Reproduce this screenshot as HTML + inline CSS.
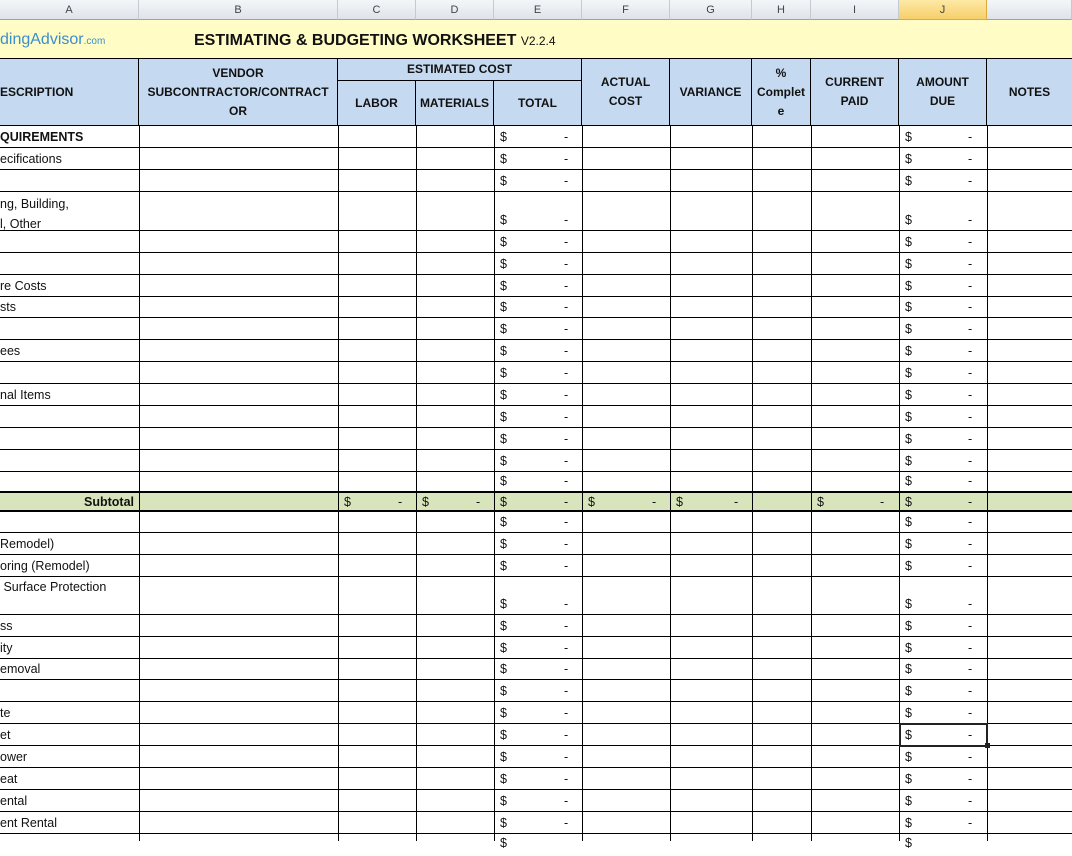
<!DOCTYPE html>
<html><head><meta charset="utf-8">
<style>
*{margin:0;padding:0;box-sizing:border-box}
body{width:1072px;height:841px;overflow:hidden;background:#fff;position:relative;font-family:"Liberation Sans",sans-serif;font-size:12.5px;color:#111}
.ab{position:absolute}
.ch{position:absolute;top:0;height:20px;background:linear-gradient(#f4f6f9,#dfe4ea);border-right:1px solid #c4cad3;border-bottom:1px solid #9aa3ad;text-align:center;font-size:11px;line-height:20px;color:#444}
.vl{position:absolute;width:1px;background:#000;top:126px;bottom:0}
.r{position:absolute;left:0;width:1072px;border-bottom:1px solid #000}
.r span{position:absolute;bottom:2px;white-space:nowrap;line-height:15px}
.h{position:absolute;background:#c5d9f1;border-right:1px solid #000;font-weight:bold;font-size:12px;text-align:center;display:flex;align-items:center;justify-content:center;line-height:19px}
</style></head><body>
<div class="ch" style="left:0;width:139px">A</div>
<div class="ch" style="left:139px;width:199px">B</div>
<div class="ch" style="left:338px;width:78px">C</div>
<div class="ch" style="left:416px;width:78px">D</div>
<div class="ch" style="left:494px;width:88px">E</div>
<div class="ch" style="left:582px;width:88px">F</div>
<div class="ch" style="left:670px;width:82px">G</div>
<div class="ch" style="left:752px;width:59px">H</div>
<div class="ch" style="left:811px;width:88px">I</div>
<div class="ch" style="left:899px;width:88px;background:linear-gradient(#fde9a6,#f7cf6a);border-color:#e0a93c">J</div>
<div class="ch" style="left:987px;width:85px"></div>

<div class="ab" style="left:0;top:20px;width:1072px;height:39px;background:#fffcc6;border-bottom:1px solid #000"></div>
<div class="ab" style="left:0;top:31px;font-size:16px;color:#3a8fd0;font-family:'Liberation Sans',sans-serif">dingAdvisor<span style="font-size:10px">.com</span></div>
<div class="ab" style="left:194px;top:32px;font-size:16px;font-weight:bold;color:#111">ESTIMATING &amp; BUDGETING WORKSHEET <span style="font-weight:normal;font-size:12px">V2.2.4</span></div>

<div class="ab" style="left:0;top:59px;width:1072px;height:67px;background:#c5d9f1;border-bottom:2px solid #000"></div>
<div class="h" style="left:0;top:59px;width:139px;height:66px;justify-content:flex-start">ESCRIPTION</div>
<div class="h" style="left:139px;top:59px;width:199px;height:66px">VENDOR<br>SUBCONTRACTOR/CONTRACT<br>OR</div>
<div class="h" style="left:338px;top:59px;width:244px;height:22px;border-bottom:1px solid #000">ESTIMATED COST</div>
<div class="h" style="left:338px;top:81px;width:78px;height:44px">LABOR</div>
<div class="h" style="left:416px;top:81px;width:78px;height:44px">MATERIALS</div>
<div class="h" style="left:494px;top:81px;width:88px;height:44px">TOTAL</div>
<div class="h" style="left:582px;top:59px;width:88px;height:66px">ACTUAL<br>COST</div>
<div class="h" style="left:670px;top:59px;width:82px;height:66px">VARIANCE</div>
<div class="h" style="left:752px;top:59px;width:59px;height:66px">%<br>Complet<br>e</div>
<div class="h" style="left:811px;top:59px;width:88px;height:66px">CURRENT<br>PAID</div>
<div class="h" style="left:899px;top:59px;width:88px;height:66px">AMOUNT<br>DUE</div>
<div class="h" style="left:987px;top:59px;width:85px;height:66px;border-right:0">NOTES</div>

<div class="r" style="top:126px;height:22px"><span style="left:0;font-weight:bold">QUIREMENTS</span><span style="left:500px">$</span><span style="left:564px">-</span><span style="left:905px">$</span><span style="left:968px">-</span></div>
<div class="r" style="top:148px;height:22px"><span style="left:0">ecifications</span><span style="left:500px">$</span><span style="left:564px">-</span><span style="left:905px">$</span><span style="left:968px">-</span></div>
<div class="r" style="top:170px;height:22px"><span style="left:500px">$</span><span style="left:564px">-</span><span style="left:905px">$</span><span style="left:968px">-</span></div>
<div class="r" style="top:192px;height:39px"><span style="left:0;top:2px;bottom:auto;line-height:20px">ng, Building,<br>l, Other</span><span style="left:500px">$</span><span style="left:564px">-</span><span style="left:905px">$</span><span style="left:968px">-</span></div>
<div class="r" style="top:231px;height:22px"><span style="left:500px">$</span><span style="left:564px">-</span><span style="left:905px">$</span><span style="left:968px">-</span></div>
<div class="r" style="top:253px;height:22px"><span style="left:500px">$</span><span style="left:564px">-</span><span style="left:905px">$</span><span style="left:968px">-</span></div>
<div class="r" style="top:275px;height:22px"><span style="left:0">re Costs</span><span style="left:500px">$</span><span style="left:564px">-</span><span style="left:905px">$</span><span style="left:968px">-</span></div>
<div class="r" style="top:297px;height:21px"><span style="left:0">sts</span><span style="left:500px">$</span><span style="left:564px">-</span><span style="left:905px">$</span><span style="left:968px">-</span></div>
<div class="r" style="top:318px;height:22px"><span style="left:500px">$</span><span style="left:564px">-</span><span style="left:905px">$</span><span style="left:968px">-</span></div>
<div class="r" style="top:340px;height:22px"><span style="left:0">ees</span><span style="left:500px">$</span><span style="left:564px">-</span><span style="left:905px">$</span><span style="left:968px">-</span></div>
<div class="r" style="top:362px;height:22px"><span style="left:500px">$</span><span style="left:564px">-</span><span style="left:905px">$</span><span style="left:968px">-</span></div>
<div class="r" style="top:384px;height:22px"><span style="left:0">nal Items</span><span style="left:500px">$</span><span style="left:564px">-</span><span style="left:905px">$</span><span style="left:968px">-</span></div>
<div class="r" style="top:406px;height:22px"><span style="left:500px">$</span><span style="left:564px">-</span><span style="left:905px">$</span><span style="left:968px">-</span></div>
<div class="r" style="top:428px;height:22px"><span style="left:500px">$</span><span style="left:564px">-</span><span style="left:905px">$</span><span style="left:968px">-</span></div>
<div class="r" style="top:450px;height:22px"><span style="left:500px">$</span><span style="left:564px">-</span><span style="left:905px">$</span><span style="left:968px">-</span></div>
<div class="r" style="top:472px;height:21px;border-bottom:2px solid #000"><span style="left:500px">$</span><span style="left:564px">-</span><span style="left:905px">$</span><span style="left:968px">-</span></div>
<div class="r" style="top:493px;height:19px;background:#d8e4bc;border-bottom:2px solid #000"><span style="left:84px;font-weight:bold;bottom:0">Subtotal</span><span style="left:344px;bottom:0">$</span><span style="left:398px;bottom:0">-</span><span style="left:422px;bottom:0">$</span><span style="left:476px;bottom:0">-</span><span style="left:500px;bottom:0">$</span><span style="left:564px;bottom:0">-</span><span style="left:588px;bottom:0">$</span><span style="left:652px;bottom:0">-</span><span style="left:676px;bottom:0">$</span><span style="left:734px;bottom:0">-</span><span style="left:817px;bottom:0">$</span><span style="left:880px;bottom:0">-</span><span style="left:905px;bottom:0">$</span><span style="left:968px;bottom:0">-</span></div>
<div class="r" style="top:512px;height:21px"><span style="left:500px">$</span><span style="left:564px">-</span><span style="left:905px">$</span><span style="left:968px">-</span></div>
<div class="r" style="top:533px;height:22px"><span style="left:0">Remodel)</span><span style="left:500px">$</span><span style="left:564px">-</span><span style="left:905px">$</span><span style="left:968px">-</span></div>
<div class="r" style="top:555px;height:22px"><span style="left:0">oring (Remodel)</span><span style="left:500px">$</span><span style="left:564px">-</span><span style="left:905px">$</span><span style="left:968px">-</span></div>
<div class="r" style="top:577px;height:38px"><span style="left:0;top:2px;bottom:auto;line-height:16px">&nbsp;Surface Protection</span><span style="left:500px">$</span><span style="left:564px">-</span><span style="left:905px">$</span><span style="left:968px">-</span></div>
<div class="r" style="top:615px;height:22px"><span style="left:0">ss</span><span style="left:500px">$</span><span style="left:564px">-</span><span style="left:905px">$</span><span style="left:968px">-</span></div>
<div class="r" style="top:637px;height:22px"><span style="left:0">ity</span><span style="left:500px">$</span><span style="left:564px">-</span><span style="left:905px">$</span><span style="left:968px">-</span></div>
<div class="r" style="top:659px;height:21px"><span style="left:0">emoval</span><span style="left:500px">$</span><span style="left:564px">-</span><span style="left:905px">$</span><span style="left:968px">-</span></div>
<div class="r" style="top:680px;height:22px"><span style="left:500px">$</span><span style="left:564px">-</span><span style="left:905px">$</span><span style="left:968px">-</span></div>
<div class="r" style="top:702px;height:22px"><span style="left:0">te</span><span style="left:500px">$</span><span style="left:564px">-</span><span style="left:905px">$</span><span style="left:968px">-</span></div>
<div class="r" style="top:724px;height:22px"><span style="left:0">et</span><span style="left:500px">$</span><span style="left:564px">-</span><span style="left:905px">$</span><span style="left:968px">-</span></div>
<div class="r" style="top:746px;height:22px"><span style="left:0">ower</span><span style="left:500px">$</span><span style="left:564px">-</span><span style="left:905px">$</span><span style="left:968px">-</span></div>
<div class="r" style="top:768px;height:22px"><span style="left:0">eat</span><span style="left:500px">$</span><span style="left:564px">-</span><span style="left:905px">$</span><span style="left:968px">-</span></div>
<div class="r" style="top:790px;height:22px"><span style="left:0">ental</span><span style="left:500px">$</span><span style="left:564px">-</span><span style="left:905px">$</span><span style="left:968px">-</span></div>
<div class="r" style="top:812px;height:22px"><span style="left:0">ent Rental</span><span style="left:500px">$</span><span style="left:564px">-</span><span style="left:905px">$</span><span style="left:968px">-</span></div>
<div class="r" style="top:834px;height:22px;border:0"><span style="left:500px;top:2px">$</span><span style="left:905px;top:2px">$</span></div>

<div class="vl" style="left:139px"></div><div class="vl" style="left:338px"></div><div class="vl" style="left:416px"></div><div class="vl" style="left:494px"></div><div class="vl" style="left:582px"></div><div class="vl" style="left:670px"></div><div class="vl" style="left:752px"></div><div class="vl" style="left:811px"></div><div class="vl" style="left:899px"></div><div class="vl" style="left:987px"></div>
<div class="ab" style="left:899px;top:723px;width:89px;height:24px;border:2px solid #222"></div>
<div class="ab" style="left:985px;top:743px;width:5px;height:5px;background:#222"></div>
</body></html>
